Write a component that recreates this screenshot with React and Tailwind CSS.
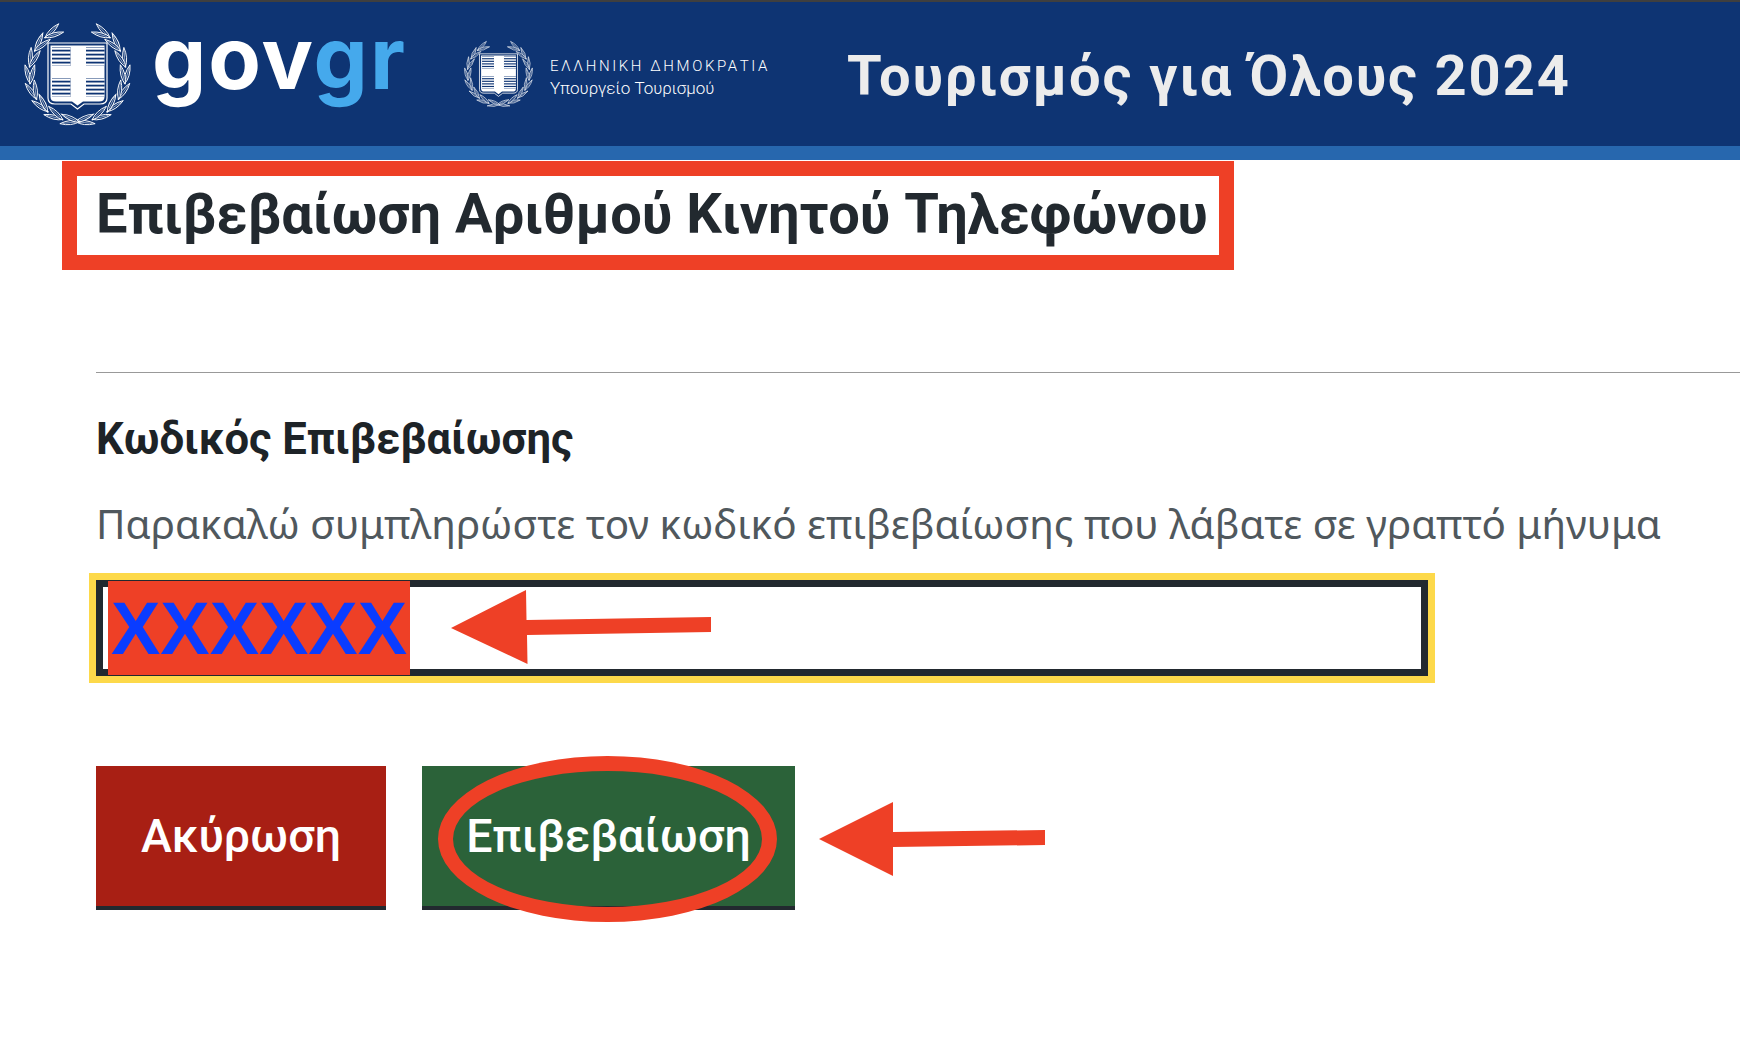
import React from "react";

// one side of the laurel wreath, leaves placed along an arc
function Branch({ flip }) {
  const leaves = [];
  for (let a = 170; a > 15; a -= 20) {
    const rad = (a * Math.PI) / 180;
    leaves.push({ a, rad, r: 50, o: a + 90 + 16 });
    leaves.push({ a, rad, r: 45, o: a + 90 - 14 });
  }
  return (
    <g transform={flip ? "matrix(-1 0 0 1 107 0)" : undefined}>
      {leaves.map((l, i) => (
        <g key={i} transform={`translate(${53.5 + l.r * Math.sin(l.rad)} ${53.5 - l.r * Math.cos(l.rad)}) rotate(${l.o})`}>
          <path d="M0 -11 Q4 -2 0 9 Q-4 -2 0 -11Z" fill="#0e3473" stroke="white" strokeWidth="0.9" />
          <path d="M0 -7 L0 6" stroke="white" strokeWidth="0.5" />
        </g>
      ))}
    </g>
  );
}

function Emblem({ className }) {
  const stripes = (x, y) =>
    [0, 4, 8, 12, 16].map((d) => <rect key={d} x={x} y={y + d} width="18.5" height="2.2" fill="white" />);
  return (
    <svg viewBox="0 0 107 107" className={className}>
      <Branch />
      <Branch flip />
      <path d="M24 23 H83 V78 Q83 84 76 84 H60 L53.5 89 L47 84 H31 Q24 84 24 78Z" fill="#0e3473" stroke="white" strokeWidth="1.2" />
      <path d="M26.5 25.5 H80.5 V77 Q80.5 81.5 75 81.5 H59 L53.5 85.5 L48 81.5 H32 Q26.5 81.5 26.5 77Z" fill="white" />
      <rect x="28" y="27" width="18.5" height="19" fill="#0e3473" />
      <rect x="62" y="27" width="18.5" height="19" fill="#0e3473" />
      <rect x="28" y="58" width="18.5" height="19" fill="#0e3473" />
      <rect x="62" y="58" width="18.5" height="19" fill="#0e3473" />
      {stripes(28, 27.5)}
      {stripes(62, 27.5)}
      {stripes(28, 58.5)}
      {stripes(62, 58.5)}
    </svg>
  );
}

export default function App() {
  return (
    <div className="relative w-full h-[1040px] overflow-hidden bg-white font-['Roboto',sans-serif]">
      {/* Header */}
      <div className="flex h-[160px] items-start border-t-2 border-b-[14px] border-t-[#3f3f3f] border-b-[#2767ae] bg-[#0e3473] pl-[24px]">
        <Emblem className="mt-[18px] h-[107px] w-[107px] shrink-0" />
        <div className="ml-[21px] mt-[4px] font-['Inter',sans-serif] text-[86px] leading-[104px] font-bold tracking-[2px] text-white">
          gov<span className="text-[#45a9ec]">gr</span>
        </div>
        <Emblem className="ml-[57px] mt-[37px] h-[69px] w-[69px] shrink-0" />
        <div className="ml-[17px] mt-[53px] font-light text-white">
          <div className="text-[15px] leading-[22px] tracking-[2.6px] whitespace-nowrap">ΕΛΛΗΝΙΚΗ ΔΗΜΟΚΡΑΤΙΑ</div>
          <div className="text-[17px] leading-[22px] whitespace-nowrap">Υπουργείο Τουρισμού</div>
        </div>
        <div className="ml-[77px] mt-[41px] text-[56px] leading-[66px] font-bold tracking-[1.9px] text-[#ececec] whitespace-nowrap">
          Τουρισμός για Όλους 2024
        </div>
      </div>

      {/* Heading with marker box */}
      <div className="ml-[62px] mt-px flex h-[109px] w-[1172px] items-center border-[15px] border-[#ee4026] pl-[19px]">
        <h1 className="-mt-[3px] text-[56px] leading-[70px] font-bold text-[#22292f] whitespace-nowrap">
          Επιβεβαίωση Αριθμού Κινητού Τηλεφώνου
        </h1>
      </div>

      <div className="ml-[96px] mt-[102px] h-px bg-[#999999]" />

      <div className="pl-[96px]">
        <label className="mt-[39px] block text-[43.6px] leading-[56px] font-bold text-[#1d2327] whitespace-nowrap">
          Κωδικός Επιβεβαίωσης
        </label>
        <p className="mt-[28px] font-['Noto_Sans',sans-serif] text-[40.4px] leading-[56px] text-[#50585d] whitespace-nowrap">
          Παρακαλώ συμπληρώστε τον κωδικό επιβεβαίωσης που λάβατε σε γραπτό μήνυμα
        </p>

        {/* Input */}
        <div className="relative mt-[21px] -ml-[7px] w-[1346px] border-[7px] border-[#fdd94a]">
          <div className="h-[96px] border-[7px] border-[#22292f] bg-white">
            <div className="ml-[5px] -mt-[6px] flex h-[94px] w-[302px] items-center justify-center bg-[#ee4026] font-['Liberation_Sans',sans-serif] text-[74px] font-bold text-[#0a3cff]">
              XXXXXX
            </div>
          </div>
          <svg viewBox="0 0 260 76" className="absolute left-[355px] top-[10px] h-[76px] w-[260px]">
            <path d="M0 38 L75 0 L75.5 30 L260 27 L260 42 L76 45 L76.5 74Z" fill="#ee4026" />
          </svg>
        </div>

        {/* Buttons */}
        <div className="relative mt-[83px] flex gap-[36px]">
          <button className="flex h-[144px] w-[290px] items-center justify-center border-b-4 border-[#22292f] bg-[#a81f14] pt-[2px] text-[46.5px] font-medium text-white">
            Ακύρωση
          </button>
          <button className="flex h-[144px] w-[373px] items-center justify-center border-b-4 border-[#22292f] bg-[#2b6239] pt-[2px] text-[46.5px] font-medium text-white">
            Επιβεβαίωση
          </button>
          <div className="absolute left-[342px] top-[-10px] h-[166px] w-[339px] rounded-[50%] border-[15px] border-[#ee4026]" />
          <svg viewBox="0 0 226 76" className="absolute left-[723px] top-[36px] h-[76px] w-[226px]">
            <path d="M0 37 L74 0 L74 30 L226 28 L226 43 L74 45 L74 74Z" fill="#ee4026" />
          </svg>
        </div>
      </div>
    </div>
  );
}
